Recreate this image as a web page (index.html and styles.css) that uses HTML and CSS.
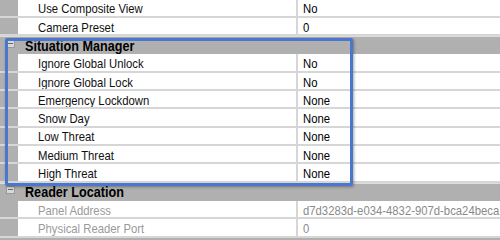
FILE: index.html
```html
<!DOCTYPE html>
<html>
<head>
<meta charset="utf-8">
<link rel="stylesheet" href="styles.css">
</head>
<body>
<div class="grid">
  <div class="row"><div class="gut"></div><div class="name"><span class="t">Use Composite View</span></div><div class="val"><span class="t">No</span></div></div>
  <div class="row"><div class="gut"></div><div class="name"><span class="t">Camera Preset</span></div><div class="val"><span class="t">0</span></div></div>
  <div class="cat"><span class="toggle"></span><span class="cat-name t">Situation Manager</span></div>
  <div class="row"><div class="gut"></div><div class="name"><span class="t">Ignore Global Unlock</span></div><div class="val"><span class="t">No</span></div></div>
  <div class="row"><div class="gut"></div><div class="name"><span class="t">Ignore Global Lock</span></div><div class="val"><span class="t">No</span></div></div>
  <div class="row"><div class="gut"></div><div class="name"><span class="t">Emergency Lockdown</span></div><div class="val"><span class="t">None</span></div></div>
  <div class="row"><div class="gut"></div><div class="name"><span class="t">Snow Day</span></div><div class="val"><span class="t">None</span></div></div>
  <div class="row"><div class="gut"></div><div class="name"><span class="t">Low Threat</span></div><div class="val"><span class="t">None</span></div></div>
  <div class="row"><div class="gut"></div><div class="name"><span class="t">Medium Threat</span></div><div class="val"><span class="t">None</span></div></div>
  <div class="row"><div class="gut"></div><div class="name"><span class="t">High Threat</span></div><div class="val"><span class="t">None</span></div></div>
  <div class="cat"><span class="toggle"></span><span class="cat-name t">Reader Location</span></div>
  <div class="row ro"><div class="gut"></div><div class="name"><span class="t">Panel Address</span></div><div class="val"><span class="t">d7d3283d-e034-4832-907d-bca24beca</span></div></div>
  <div class="row ro"><div class="gut"></div><div class="name"><span class="t">Physical Reader Port</span></div><div class="val"><span class="t">0</span></div></div>
  <div class="selection"></div>
</div>
</body>
</html>
```
FILE: styles.css
```css
html, body {
  margin: 0;
  padding: 0;
  background: #b0b0b0;
  overflow: hidden;
}
.grid {
  position: relative;
  width: 500px;
  margin-top: -0.5px;
  font-family: "Liberation Sans", Arial, sans-serif;
  font-size: 13px;
  color: #111;
}
.t {
  display: inline-block;
  transform: scaleX(0.87);
  transform-origin: left center;
}
.row {
  display: grid;
  grid-template-columns: 18px 280px 1fr;
  height: 18.33px;
  box-sizing: border-box;
  border-bottom: 2px solid #d6d6d6;
  background: #ffffff;
  white-space: nowrap;
  overflow: hidden;
}
.gut {
  background: #b0b0b0;
}
.name {
  padding-left: 20px;
  padding-top: 2.7px;
  line-height: 14.5px;
  border-right: 2px solid #d6d6d6;
  overflow: hidden;
}
.val {
  padding-left: 5px;
  padding-top: 2.7px;
  line-height: 14.5px;
  color: #000;
  overflow: hidden;
}
.ro .name {
  color: #9a9a9a;
}
.ro .val {
  color: #8a8a8a;
}
.cat {
  display: flex;
  align-items: center;
  height: 18.33px;
  background: #b0b0b0;
  border-top: 1px solid #dedede;
  box-sizing: border-box;
}
.toggle {
  width: 7px;
  height: 6px;
  margin-left: 6px;
  margin-right: 10px;
  margin-top: -4px;
  border: 1px solid #9a9a9a;
  background: #d8d8d8;
  position: relative;
}
.toggle::after {
  content: "";
  position: absolute;
  left: 1px;
  right: 1px;
  top: 2px;
  height: 1px;
  background: #6a6a6a;
}
.cat-name {
  font-weight: bold;
  font-size: 14.5px;
  color: #000;
  line-height: 17px;
  padding-top: 1px;
}
.selection {
  position: absolute;
  left: 5px;
  top: 38px;
  width: 348px;
  height: 148px;
  box-sizing: border-box;
  border: 3px solid #4a76cc;
  border-radius: 2px;
  box-shadow: 1px 1px 3px rgba(0, 0, 0, 0.35);
}
```
